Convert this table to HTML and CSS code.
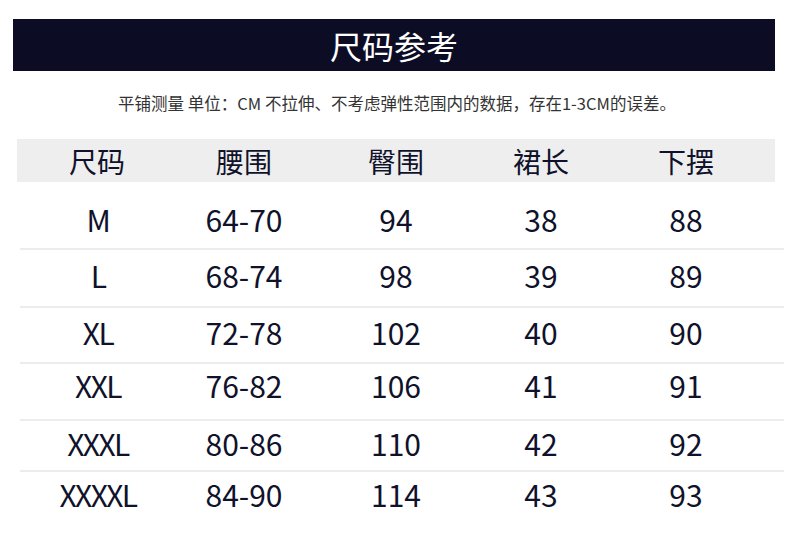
FILE: index.html
```html
<!DOCTYPE html>
<html lang="zh-CN">
<head>
<meta charset="utf-8">
<title>尺码参考</title>
<link rel="stylesheet" href="styles.css">
</head>
<body>
<div class="page">
  <div class="title-bar">尺码参考</div>
  <p class="note">平铺测量 单位：CM 不拉伸、不考虑弹性范围内的数据，存在1-3CM的误差。</p>
  <div class="size-table">
    <div class="head">
      <span>尺码</span><span>腰围</span><span>臀围</span><span>裙长</span><span>下摆</span>
    </div>
    <div class="body">
      <div class="row first"><span class="size">M</span><span>64-70</span><span>94</span><span>38</span><span>88</span></div>
      <div class="row"><span class="size">L</span><span>68-74</span><span>98</span><span>39</span><span>89</span></div>
      <div class="row"><span class="size">XL</span><span>72-78</span><span>102</span><span>40</span><span>90</span></div>
      <div class="row raise"><span class="size">XXL</span><span>76-82</span><span>106</span><span>41</span><span>91</span></div>
      <div class="row"><span class="size">XXXL</span><span>80-86</span><span>110</span><span>42</span><span>92</span></div>
      <div class="row last"><span class="size">XXXXL</span><span>84-90</span><span>114</span><span>43</span><span>93</span></div>
    </div>
  </div>
</div>
</body>
</html>
```
FILE: styles.css
```css
* { box-sizing: border-box; }
html, body { margin: 0; padding: 0; background: #fff; }
body {
  font-family: "Noto Sans CJK SC", "Noto Sans", sans-serif;
  color: #10122b;
}
.page {
  width: 790px;
  height: 542px;
  padding-top: 19px;
  overflow: hidden;
}
.title-bar {
  margin-left: 13px;
  width: 762px;
  height: 52px;
  background: #0c0d24;
  color: #ffffff;
  font-size: 32px;
  line-height: 52px;
  text-align: center;
}
.note {
  margin: 20px 0 0 0;
  height: 24px;
  font-size: 16.5px;
  line-height: 24px;
  color: #333333;
  text-align: center;
  padding-left: 4px;
}
.size-table {
  margin-top: 24px;
}
.head {
  margin-left: 17px;
  width: 758px;
  height: 43px;
  background: #eeeeee;
  display: grid;
  grid-template-columns: 160px 134px 170px 120px 170px;
  align-items: center;
  font-size: 28px;
  line-height: 1;
}
.head span, .row span { text-align: center; }
.body {
  margin-left: 20px;
  width: 764px;
  display: grid;
  grid-template-rows: 68px 58px 56px 57px 51px 50px;
}
.row {
  display: grid;
  grid-template-columns: 154px 140px 164px 126px 164px;
  align-items: center;
  border-bottom: 2px solid #ececec;
  padding-bottom: 6px;
  font-size: 30px;
  line-height: 1;
}
.row .size {
  letter-spacing: -1.6px;
  padding-left: 2px;
}
.row.first { padding-top: 14px; }
.row.raise { padding-bottom: 14px; }
.row.last { border-bottom: none; }
```
